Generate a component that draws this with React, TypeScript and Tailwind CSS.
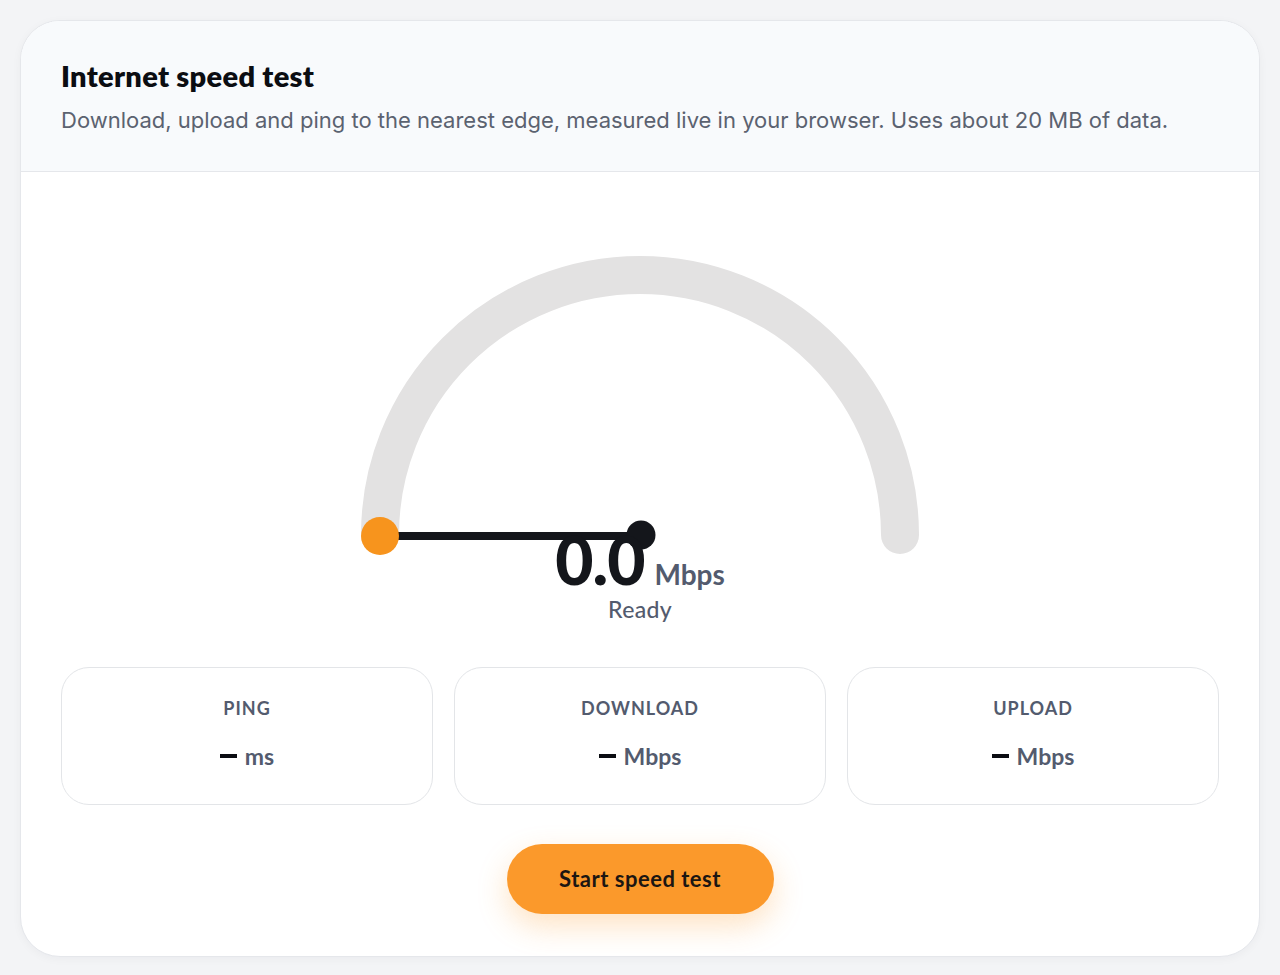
import React from "react";

const stats = [
  { label: "PING", unit: "ms" },
  { label: "DOWNLOAD", unit: "Mbps" },
  { label: "UPLOAD", unit: "Mbps" },
];

function Gauge() {
  return (
    <svg width="600" height="330" viewBox="0 0 600 330" className="block">
      {/* track */}
      <path
        d="M 40 300 A 260 260 0 0 1 560 300"
        fill="none"
        stroke="#e3e2e2"
        strokeWidth="38"
        strokeLinecap="round"
      />
      {/* needle */}
      <line x1="40" y1="301" x2="300" y2="301" stroke="#14161b" strokeWidth="8" strokeLinecap="round" />
      <circle cx="40" cy="301" r="19" fill="#f7941d" />
      <circle cx="301" cy="300" r="14.5" fill="#14161b" />
    </svg>
  );
}

export default function App() {
  return (
    <div className="min-h-[975px] w-full bg-[#f3f4f6] px-[20px] pt-[20px] pb-[20px] font-['Lato',_sans-serif]">
      <div className="overflow-hidden rounded-[40px] border border-[#e5e7eb] bg-white shadow-[0_2px_10px_rgba(15,23,42,0.04)]">
        {/* header */}
        <div className="border-b border-[#e5e7eb] bg-[#f8fafc] px-[40px] pt-[37px] pb-[35px]">
          <h1 className="text-[29px] font-extrabold leading-[36px] tracking-[0.3px] text-[#0b0d12]">
            Internet speed test
          </h1>
          <p className="mt-[10px] font-['Inter',_sans-serif] text-[22px] leading-[32px] text-[#5b6270]">
            Download, upload and ping to the nearest edge, measured live in your browser. Uses about 20 MB of data.
          </p>
        </div>

        {/* body */}
        <div className="flex flex-col items-center px-[40px] pt-[63px] pb-[42px]">
          <Gauge />
          <div className="relative -mt-[38px] flex items-baseline gap-[10px]">
            <span className="text-[66px] font-black leading-none tracking-[-1px] text-[#14161b]">0.0</span>
            <span className="text-[28px] font-bold leading-none text-[#535b6e]">Mbps</span>
          </div>
          <div className="-mt-[1px] text-[23px] font-medium tracking-[0.3px] text-[#535b6e]">Ready</div>

          <div className="mt-[40px] grid w-full grid-cols-3 gap-[21px]">
            {stats.map((s) => (
              <div
                key={s.label}
                className="flex h-[138px] flex-col items-center rounded-[28px] border border-[#e3e5e8] bg-white pt-[31px]"
              >
                <div className="text-[18px] font-bold leading-none tracking-[1px] text-[#535b6e]">{s.label}</div>
                <div className="mt-[28px] flex items-center gap-[8px]">
                  <span className="block h-[4px] w-[17px] bg-[#0b0d12]" />
                  <span className="text-[23px] font-bold leading-none text-[#535b6e]">{s.unit}</span>
                </div>
              </div>
            ))}
          </div>

          <button className="mt-[39px] h-[70px] w-[267px] rounded-full bg-[#fb992b] text-[22px] font-bold tracking-[0.5px] text-[#1c1612] shadow-[0_12px_30px_rgba(251,153,43,0.28)]">
            Start speed test
          </button>
        </div>
      </div>
    </div>
  );
}
